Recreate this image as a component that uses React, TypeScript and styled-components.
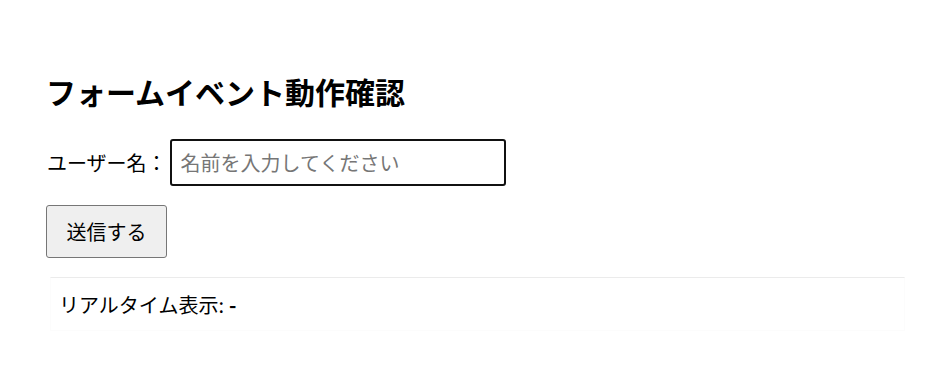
import React, { useState } from "react";
import styled, { createGlobalStyle } from "styled-components";

const Global = createGlobalStyle`
  html, body { margin: 0; padding: 0; background: #fff; }
  body { font-family: "Noto Sans CJK JP", "Noto Sans", sans-serif; color: #000; }
`;

const Page = styled.div`
  padding: 71px 47px 0 46px;
  display: flex;
  flex-direction: column;
`;

const Title = styled.h2`
  margin: 0 0 28px 0;
  font-size: 30px;
  line-height: 40px;
  font-weight: 700;
`;

const Row = styled.div`
  display: flex;
  align-items: center;
  gap: 3px;
`;

const Label = styled.label`
  font-size: 20px;
  line-height: 26px;
  padding-left: 1px;
`;

const Input = styled.input`
  box-sizing: border-box;
  width: 336px;
  height: 47px;
  border: 2px solid #111;
  border-radius: 3px;
  padding: 0 9px;
  font-family: inherit;
  font-size: 20px;
  color: #000;
  outline: none;
  &::placeholder { color: #767676; }
`;

const Button = styled.button`
  box-sizing: border-box;
  align-self: flex-start;
  margin-top: 19px;
  width: 121px;
  height: 53px;
  padding: 0;
  background: #efefef;
  border: 1px solid #767676;
  border-radius: 3px;
  font-family: inherit;
  font-size: 20px;
  color: #000;
`;

const Display = styled.div`
  box-sizing: border-box;
  margin: 19px 0 0 4px;
  width: 855px;
  height: 54px;
  padding: 0 8px;
  display: flex;
  align-items: center;
  gap: 5px;
  border-top: 1px solid #ebebeb;
  border-left: 1px solid #fcfcfc;
  border-right: 1px solid #fcfcfc;
  border-bottom: 1px solid #fcfcfc;
  font-size: 20px;
`;

const Value = styled.strong`
  font-weight: 700;
`;

export default function App() {
  const [name, setName] = useState("");
  return (
    <>
      <Global />
      <Page>
        <Title>フォームイベント動作確認</Title>
        <Row>
          <Label htmlFor="user">ユーザー名：</Label>
          <Input
            id="user"
            value={name}
            onChange={(e) => setName(e.target.value)}
            placeholder="名前を入力してください"
          />
        </Row>
        <Button type="button">送信する</Button>
        <Display>
          <span>リアルタイム表示:</span>
          <Value>{name || "-"}</Value>
        </Display>
      </Page>
    </>
  );
}
